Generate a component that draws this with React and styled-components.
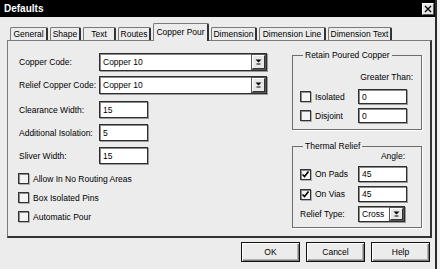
import React from "react";
import styled, { createGlobalStyle } from "styled-components";

const GlobalStyle = createGlobalStyle`
  html, body {
    margin: 0;
    padding: 0;
    background: #f2f2f2;
  }
  body {
    font-family: "Liberation Sans", Arial, sans-serif;
    font-size: 8.5px;
    color: #000;
  }
`;

const Window = styled.div`
  width: 437px;
  height: 269px;
  box-sizing: border-box;
  background: #ececec;
  border-right: 2px solid #2a2a2a;
  display: flex;
  flex-direction: column;
  overflow: hidden;
`;

const TitleBar = styled.div`
  height: 17px;
  background: #000;
  color: #fff;
  font-weight: bold;
  font-size: 10px;
  display: flex;
  align-items: center;
  justify-content: space-between;
  padding: 0 1px 0 4px;
`;

const CloseButton = styled.div`
  width: 12px;
  height: 12px;
  box-sizing: border-box;
  background: #e6e6e6;
  border: 1px solid #fff;
  border-right-color: #555;
  border-bottom-color: #555;
  display: flex;
  align-items: center;
  justify-content: center;
`;

const Content = styled.div`
  display: flex;
  flex-direction: column;
  padding: 6px 0 0 7px;
`;

const TabRow = styled.div`
  display: flex;
  align-items: flex-end;
  gap: 2px;
  height: 17px;
  padding-left: 3px;
`;

const Tab = styled.div`
  width: ${p => p.w}px;
  height: ${p => (p.active ? 18 : 13)}px;
  margin-bottom: ${p => (p.active ? -1 : 0)}px;
  box-sizing: border-box;
  background: #ececec;
  border: 1px solid #7a7a7a;
  border-bottom: none;
  border-right: 2px solid #333;
  border-radius: 2px 2px 0 0;
  display: flex;
  align-items: ${p => (p.active ? "flex-start" : "center")};
  padding-top: ${p => (p.active ? 3 : 0)}px;
  justify-content: center;
  white-space: nowrap;
  position: relative;
  z-index: ${p => (p.active ? 2 : 0)};
`;

const Panel = styled.div`
  width: 425px;
  height: 198px;
  box-sizing: border-box;
  border: 1px solid #7a7a7a;
  border-right: 2px solid #333;
  border-bottom: 2px solid #333;
  display: flex;
  justify-content: space-between;
`;

const LeftCol = styled.div`
  display: flex;
  flex-direction: column;
  padding: 12px 0 0 11px;
`;

const FieldRow = styled.div`
  display: flex;
  align-items: center;
  margin-top: ${p => p.mt || 0}px;
`;

const Label = styled.div`
  width: 80px;
  white-space: nowrap;
`;

const sunken = `
  box-sizing: border-box;
  background: #fff;
  border: 1px solid #2e2e2e;
  box-shadow: 1px 1px 0 #9a9a9a, inset 1px 1px 0 #8a8a8a;
`;

const SelectBox = styled.div`
  ${sunken}
  width: ${p => p.w}px;
  height: ${p => p.h}px;
  display: flex;
  align-items: center;
  justify-content: space-between;
  padding: 0 1px 0 3px;
  margin-left: ${p => p.ml || 0}px;
`;

const DropButton = styled.div`
  width: 13px;
  height: ${p => p.h}px;
  box-sizing: border-box;
  background: #e8e8e8;
  border: 1px solid #fff;
  border-right-color: #333;
  border-bottom-color: #333;
  outline: 1px solid #555;
  display: flex;
  align-items: center;
  justify-content: center;
`;

const TextBox = styled.div`
  ${sunken}
  width: ${p => p.w}px;
  height: ${p => p.h}px;
  display: flex;
  align-items: center;
  padding-left: 3px;
  margin-left: ${p => p.ml || 0}px;
  margin-right: ${p => p.mr || 0}px;
`;

const CheckList = styled.div`
  display: flex;
  flex-direction: column;
  margin-top: 5px;
  margin-left: -1px;
`;

const CheckRow = styled.div`
  display: flex;
  align-items: center;
  height: 19px;
`;

const Box = styled.div`
  width: 11px;
  height: 11px;
  box-sizing: border-box;
  background: #f4f4f4;
  border: 1px solid #333;
  box-shadow: inset 1px 1px 0 #8a8a8a, 1px 1px 0 #b0b0b0;
  margin-right: 4px;
  display: flex;
  align-items: center;
  justify-content: center;
  flex-shrink: 0;
`;

const RightCol = styled.div`
  display: flex;
  flex-direction: column;
  padding: 9px 8px 0 0;
`;

const Group = styled.fieldset`
  width: 130px;
  box-sizing: border-box;
  margin: ${p => p.mt || 0}px 0 0 0;
  padding: 0 0 ${p => p.pb}px 7px;
  min-width: 0;
  border: 1px solid #6e6e6e;
  box-shadow: 1px 1px 0 #fff;
`;

const Legend = styled.legend`
  padding: 0 2px;
  margin-left: 3px;
  line-height: 10px;
  font-size: 8.5px;
`;

const Caption = styled.div`
  height: ${p => p.h}px;
  line-height: ${p => p.h}px;
  margin-top: ${p => p.mt || 0}px;
  text-align: right;
  padding-right: ${p => p.pr}px;
`;

const GroupRow = styled.div`
  display: flex;
  align-items: center;
  margin-top: ${p => p.mt || 0}px;
`;

const RowLabel = styled.div`
  white-space: nowrap;
`;

const Spacer = styled.div`
  flex: 1;
`;

const ButtonRow = styled.div`
  display: flex;
  justify-content: flex-end;
  gap: 6px;
  margin-top: 4px;
  padding-right: 5px;
`;

const Button = styled.div`
  width: 59px;
  height: 20px;
  box-sizing: border-box;
  background: #ececec;
  border: 1px solid #111;
  box-shadow: inset 1px 1px 0 #fff, inset -1px -1px 0 #7a7a7a, inset -2px -2px 0 #b4b4b4;
  display: flex;
  align-items: center;
  justify-content: center;
`;

const Arrow = () => (
  <svg width="7" height="6" viewBox="0 0 7 6">
    <polygon points="0.5,0.5 6.5,0.5 3.5,3.5" fill="#000" />
    <rect x="1.5" y="4.5" width="4" height="1" fill="#000" />
  </svg>
);

const Check = () => (
  <svg width="9" height="9" viewBox="0 0 9 9">
    <path d="M1.5 4.5 L3.5 6.5 L7.5 1.5" fill="none" stroke="#000" strokeWidth="1.6" />
  </svg>
);

const Checkbox = ({ checked }) => <Box>{checked && <Check />}</Box>;

const Select = ({ value, w, h, ml }) => (
  <SelectBox w={w} h={h} ml={ml}>
    <span>{value}</span>
    <DropButton h={h - 4}>
      <Arrow />
    </DropButton>
  </SelectBox>
);

const tabs = [
  { name: "General", w: 38 },
  { name: "Shape", w: 31 },
  { name: "Text", w: 33 },
  { name: "Routes", w: 33 },
  { name: "Copper Pour", w: 56, active: true },
  { name: "Dimension", w: 46 },
  { name: "Dimension Line", w: 67 },
  { name: "Dimension Text", w: 64 },
];

export default function App() {
  return (
    <>
      <GlobalStyle />
      <Window>
        <TitleBar>
          <span>Defaults</span>
          <CloseButton>
            <svg width="8" height="8" viewBox="0 0 8 8">
              <path d="M1 1 L7 7 M7 1 L1 7" stroke="#000" strokeWidth="1.4" />
            </svg>
          </CloseButton>
        </TitleBar>
        <Content>
          <TabRow>
            {tabs.map(t => (
              <Tab key={t.name} w={t.w} active={t.active}>
                {t.name}
              </Tab>
            ))}
          </TabRow>
          <Panel>
            <LeftCol>
              <FieldRow>
                <Label>Copper Code:</Label>
                <Select value="Copper 10" w={168} h={18} />
              </FieldRow>
              <FieldRow mt={5}>
                <Label>Relief Copper Code:</Label>
                <Select value="Copper 10" w={168} h={18} />
              </FieldRow>
              <FieldRow mt={7}>
                <Label>Clearance Width:</Label>
                <TextBox w={49} h={17}>15</TextBox>
              </FieldRow>
              <FieldRow mt={6}>
                <Label>Additional Isolation:</Label>
                <TextBox w={49} h={17}>5</TextBox>
              </FieldRow>
              <FieldRow mt={6}>
                <Label>Sliver Width:</Label>
                <TextBox w={49} h={17}>15</TextBox>
              </FieldRow>
              <CheckList>
                <CheckRow>
                  <Checkbox />
                  <RowLabel>Allow In No Routing Areas</RowLabel>
                </CheckRow>
                <CheckRow>
                  <Checkbox />
                  <RowLabel>Box Isolated Pins</RowLabel>
                </CheckRow>
                <CheckRow>
                  <Checkbox />
                  <RowLabel>Automatic Pour</RowLabel>
                </CheckRow>
              </CheckList>
            </LeftCol>
            <RightCol>
              <Group pb={6}>
                <Legend>Retain Poured Copper</Legend>
                <Caption h={12} mt={11} pr={8}>Greater Than:</Caption>
                <GroupRow mt={6}>
                  <Checkbox />
                  <RowLabel>Isolated</RowLabel>
                  <Spacer />
                  <TextBox w={49} h={15} mr={14}>0</TextBox>
                </GroupRow>
                <GroupRow mt={4}>
                  <Checkbox />
                  <RowLabel>Disjoint</RowLabel>
                  <Spacer />
                  <TextBox w={49} h={15} mr={14}>0</TextBox>
                </GroupRow>
              </Group>
              <Group mt={11} pb={5}>
                <Legend>Thermal Relief</Legend>
                <Caption h={10} pr={16}>Angle:</Caption>
                <GroupRow mt={5}>
                  <Checkbox checked />
                  <RowLabel>On Pads</RowLabel>
                  <Spacer />
                  <TextBox w={49} h={16} mr={14}>45</TextBox>
                </GroupRow>
                <GroupRow mt={4}>
                  <Checkbox checked />
                  <RowLabel>On Vias</RowLabel>
                  <Spacer />
                  <TextBox w={49} h={16} mr={14}>45</TextBox>
                </GroupRow>
                <GroupRow mt={4}>
                  <RowLabel>Relief Type:</RowLabel>
                  <Spacer />
                  <TextBoxWrap>
                    <Select value="Cross" w={47} h={16} />
                  </TextBoxWrap>
                </GroupRow>
              </Group>
            </RightCol>
          </Panel>
          <ButtonRow>
            <Button>OK</Button>
            <Button>Cancel</Button>
            <Button>Help</Button>
          </ButtonRow>
        </Content>
      </Window>
    </>
  );
}

const TextBoxWrap = styled.div`
  margin-right: 16px;
`;
